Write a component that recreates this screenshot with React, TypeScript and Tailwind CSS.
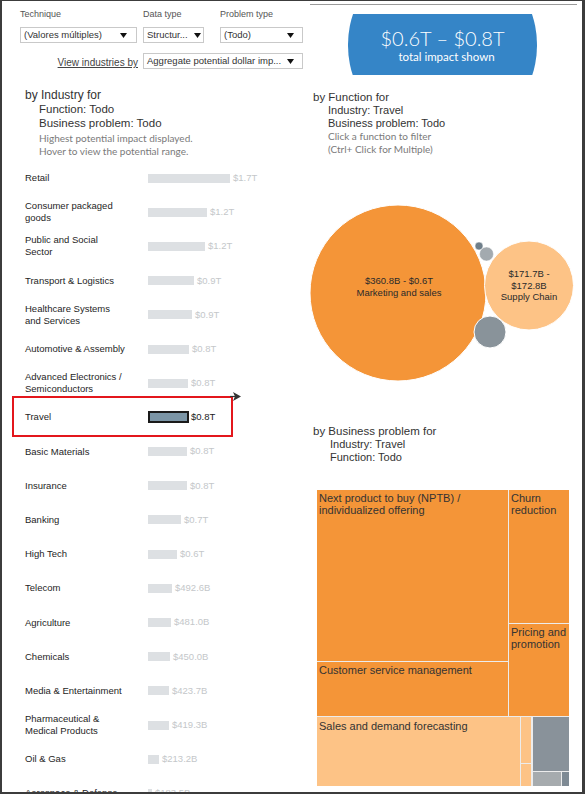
const industries = [
  { name: "Retail", value: "$1.7T", w: 82 },
  { name: "Consumer packaged\ngoods", value: "$1.2T", w: 59 },
  { name: "Public and Social\nSector", value: "$1.2T", w: 57 },
  { name: "Transport & Logistics", value: "$0.9T", w: 46 },
  { name: "Healthcare Systems\nand Services", value: "$0.9T", w: 44 },
  { name: "Automotive & Assembly", value: "$0.8T", w: 41 },
  { name: "Advanced Electronics /\nSemiconductors", value: "$0.8T", w: 40 },
  { name: "Travel", value: "$0.8T", w: 41, active: true },
  { name: "Basic Materials", value: "$0.8T", w: 39 },
  { name: "Insurance", value: "$0.8T", w: 39 },
  { name: "Banking", value: "$0.7T", w: 33 },
  { name: "High Tech", value: "$0.6T", w: 29 },
  { name: "Telecom", value: "$492.6B", w: 24 },
  { name: "Agriculture", value: "$481.0B", w: 23 },
  { name: "Chemicals", value: "$450.0B", w: 22 },
  { name: "Media & Entertainment", value: "$423.7B", w: 21 },
  { name: "Pharmaceutical &\nMedical Products", value: "$419.3B", w: 21 },
  { name: "Oil & Gas", value: "$213.2B", w: 11 },
  { name: "Aerospace & Defense", value: "$183.5B", w: 4 },
];

const arial = "font-['Liberation_Sans',Arial,sans-serif]";
const book = "font-['Lato','Open_Sans',sans-serif]";

function Caret() {
  return (
    <svg width="7" height="5" viewBox="0 0 7 5" className="shrink-0">
      <path d="M0 0h7L3.5 5z" fill="#111" />
    </svg>
  );
}

function Select({ label, className }: { label: string; className: string }) {
  return (
    <div
      className={`flex h-[16px] items-center justify-between border border-[#c9c9c9] bg-white pl-[3px] text-[9.5px] text-[#333] ${className}`}
    >
      <span className="whitespace-nowrap">{label}</span>
      <Caret />
    </div>
  );
}

export default function App() {
  return (
    <div
      className={`relative h-[794px] w-[585px] overflow-hidden border-t border-r-[3px] border-b-2 border-l-2 border-[#3c3c3c] bg-white ${arial}`}
    >
      {/* thin rule at the top right */}
      <div className="absolute left-[308px] top-[3px] h-px w-[267px] bg-[#9a9a9a]" />

      {/* filters + total */}
      <div className="flex h-[79px]">
        <div className="flex flex-col pl-[18px] pt-[8px]">
          <div className="flex">
            <div className="flex w-[117px] flex-col">
              <span className="text-[9px] leading-[11px] text-[#555]">Technique</span>
              <Select label="(Valores múltiples)" className="mt-[7px] w-[117px] pr-[9px]" />
            </div>
            <div className="ml-[6px] flex w-[61px] flex-col">
              <span className="text-[9px] leading-[11px] text-[#555]">Data type</span>
              <Select label="Structur..." className="mt-[7px] w-[61px] pr-[2px]" />
            </div>
            <div className="ml-[16px] flex w-[83px] flex-col">
              <span className="text-[9px] leading-[11px] text-[#555]">Problem type</span>
              <Select label="(Todo)" className="mt-[7px] w-[83px] pr-[8px]" />
            </div>
          </div>
          <div className="mt-[10px] flex items-end">
            <span className="w-[118px] whitespace-nowrap pb-px text-right text-[10px] leading-[11px] text-[#444] underline">
              View industries by
            </span>
            <Select label="Aggregate potential dollar imp..." className="ml-[5px] w-[160px] pr-[8px]" />
          </div>
        </div>

        <div className="ml-[45px] mt-[13px] flex h-[61px] w-[189px] items-center justify-center overflow-hidden">
          <div className="flex h-[190px] w-[189px] shrink-0 flex-col items-center justify-center rounded-full bg-[#3585c7] text-white">
            <span className={`${book} text-[20px] font-light leading-[24px]`}>$0.6T – $0.8T</span>
            <span className={`${book} ml-[8px] text-[11.5px] leading-[13px]`}>total impact shown</span>
          </div>
        </div>
      </div>

      <div className="flex">
        {/* by Industry */}
        <div className="flex w-[298px] flex-col">
          <div className="mt-[8px] pl-[23px] text-[#333]">
            <p className="text-[12px] leading-[14px]">by Industry for</p>
            <div className="pl-[14px]">
              <p className="text-[11.5px] leading-[14px]">Function: Todo</p>
              <p className="text-[11.5px] leading-[14px]">Business problem: Todo</p>
              <p className={`${book} mt-[2px] text-[10px] leading-[13px] text-[#7a7a7a]`}>
                Highest potential impact displayed.
              </p>
              <p className={`${book} text-[10px] leading-[13px] text-[#7a7a7a]`}>
                Hover to view the potential range.
              </p>
            </div>
          </div>

          <div className="mt-[3px] flex flex-col pl-[10px]">
            {industries.map((ind) => (
              <div key={ind.name} className="relative flex h-[34.2px] shrink-0 items-center pl-[13px]">
                <span className="w-[123px] whitespace-pre-line text-[9.5px] leading-[12px] text-[#1e1e1e]">
                  {ind.name}
                </span>
                {ind.active ? (
                  <div
                    className="h-[12px] border-2 border-[#1a1a1a] bg-[#7b95a6]"
                    style={{ width: ind.w }}
                  />
                ) : (
                  <div className="h-[9px] bg-[#dde0e3]" style={{ width: ind.w }} />
                )}
                <span
                  className={`text-[9.5px] ${ind.active ? "ml-[2px] text-[#222]" : "ml-[3px] text-[#c4c7ca]"}`}
                >
                  {ind.value}
                </span>
                {ind.active && (
                  <>
                    <div className="absolute left-0 top-[-4px] h-[41px] w-[221px] border-2 border-[#e3171c]" />
                    <svg
                      width="11"
                      height="9"
                      viewBox="0 0 11 9"
                      className="absolute left-[218px] top-[-8px]"
                    >
                      <path d="M0 4.5h5" stroke="#333" strokeWidth="1.2" />
                      <path d="M3 0l8 4.5L3 9l2-4.5z" fill="#333" />
                    </svg>
                  </>
                )}
              </div>
            ))}
          </div>
        </div>

        {/* by Function + by Business problem */}
        <div className="flex w-[280px] flex-col">
          <div className="mt-[10px] pl-[13px] text-[#333]">
            <p className="text-[11.5px] leading-[14px]">by Function for</p>
            <div className="pl-[15px]">
              <p className="text-[11px] leading-[13px]">Industry: Travel</p>
              <p className="text-[11px] leading-[13px]">Business problem: Todo</p>
              <p className={`${book} text-[10px] leading-[13px] text-[#7a7a7a]`}>Click a function to filter</p>
              <p className={`${book} text-[10px] leading-[13px] text-[#7a7a7a]`}>(Ctrl+ Click for Multiple)</p>
            </div>
          </div>

          <svg width="278" height="244" viewBox="0 0 278 244" className="shrink-0">
            <circle cx="98" cy="137" r="88" fill="#f49538" stroke="#fff" strokeWidth="1" />
            <circle cx="229" cy="129.5" r="44.5" fill="#fdc386" stroke="#fff" strokeWidth="1" />
            <circle cx="179" cy="90" r="4" fill="#6f7f8a" stroke="#fff" strokeWidth="0.5" />
            <circle cx="186.5" cy="98" r="7" fill="#a3aaaf" stroke="#fff" strokeWidth="0.5" />
            <circle cx="190" cy="176" r="16" fill="#89939a" stroke="#fff" strokeWidth="1" />
            <g fontFamily="'Liberation Sans', Arial, sans-serif" fontSize="9.5" fill="#2a2a2a" textAnchor="middle">
              <text x="99" y="128">$360.8B - $0.6T</text>
              <text x="99" y="139.5">Marketing and sales</text>
              <text x="229" y="121">$171.7B -</text>
              <text x="229" y="132.6">$172.8B</text>
              <text x="229" y="144.3">Supply Chain</text>
            </g>
          </svg>

          <div className="mt-[24px] pl-[13px] text-[#333]">
            <p className="text-[11.5px] leading-[14px]">by Business problem for</p>
            <div className="pl-[17px]">
              <p className="text-[11px] leading-[13px]">Industry: Travel</p>
              <p className="text-[11px] leading-[13px]">Function: Todo</p>
            </div>
          </div>

          <div className="ml-[17px] mt-[26px] flex h-[296px] w-[252px] flex-col gap-px bg-[#ececec] text-[11px] leading-[12px] text-[#333]">
            <div className="flex h-[226px] gap-px">
              <div className="flex w-[191px] flex-col gap-px">
                <div className="h-[171px] bg-[#f49538] px-[2px] pt-[2px]">
                  Next product to buy (NPTB) /<br />
                  individualized offering
                </div>
                <div className="flex-1 bg-[#f49538] px-[2px] pt-[2px]">Customer service management</div>
              </div>
              <div className="flex flex-1 flex-col gap-px">
                <div className="h-[133px] bg-[#f49538] px-[2px] pt-[2px]">
                  Churn
                  <br />
                  reduction
                </div>
                <div className="flex-1 bg-[#f49538] px-[2px] pt-[2px]">
                  Pricing and
                  <br />
                  promotion
                </div>
              </div>
            </div>
            <div className="flex flex-1 gap-px">
              <div className="w-[203px] bg-[#fdc386] px-[2px] pt-[3px]">Sales and demand forecasting</div>
              <div className="flex w-[10px] flex-col gap-px">
                <div className="h-[46px] bg-[#fdc386]" />
                <div className="flex-1 bg-[#fdc386]" />
              </div>
              <div className="ml-px flex flex-1 flex-col gap-px">
                <div className="h-[54px] bg-[#89929a]" />
                <div className="flex flex-1 gap-px">
                  <div className="w-[28px] bg-[#a6abae]" />
                  <div className="flex-1 bg-[#7e8a94]" />
                </div>
              </div>
            </div>
          </div>
        </div>
      </div>
    </div>
  );
}
